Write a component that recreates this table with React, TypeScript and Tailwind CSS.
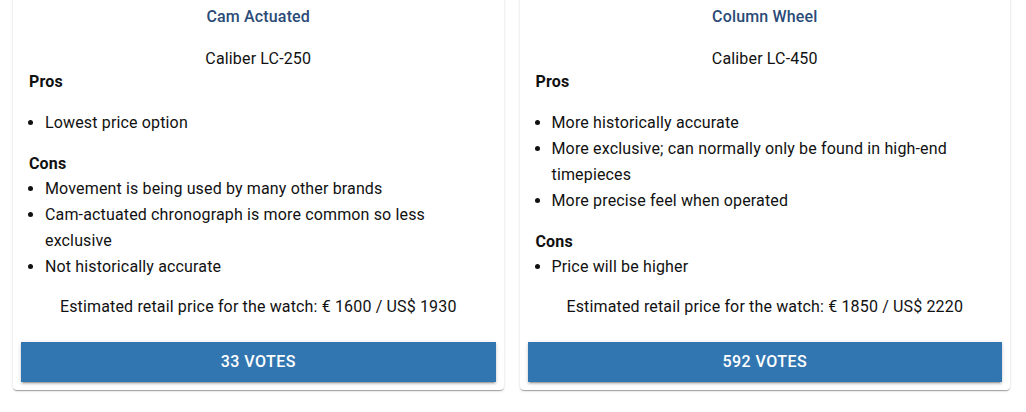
import React from "react";

type Card = {
  title: string;
  caliber: string;
  pros: string[];
  cons: string[];
  price: string;
  votes: string;
};

const cards: Card[] = [
  {
    title: "Cam Actuated",
    caliber: "Caliber LC-250",
    pros: ["Lowest price option"],
    cons: [
      "Movement is being used by many other brands",
      "Cam-actuated chronograph is more common so less exclusive",
      "Not historically accurate",
    ],
    price: "Estimated retail price for the watch: € 1600 / US$ 1930",
    votes: "33 votes",
  },
  {
    title: "Column Wheel",
    caliber: "Caliber LC-450",
    pros: [
      "More historically accurate",
      "More exclusive; can normally only be found in high-end timepieces",
      "More precise feel when operated",
    ],
    cons: ["Price will be higher"],
    price: "Estimated retail price for the watch: € 1850 / US$ 2220",
    votes: "592 votes",
  },
];

function VoteCard({ c }: { c: Card }) {
  return (
    <div className="-mt-[11px] flex flex-col rounded bg-white shadow-[0px_2px_1px_-1px_rgba(0,0,0,0.2),0px_1px_1px_0px_rgba(0,0,0,0.14),0px_1px_3px_0px_rgba(0,0,0,0.12)]">
      <div className="flex flex-1 flex-col px-4 pt-4 text-base tracking-[0.00938em] text-[#111]">
        <div className="text-center font-medium leading-6 text-[#2b4b77]">{c.title}</div>
        <div className="mt-[18px] text-center leading-6">{c.caliber}</div>
        <div className="font-bold leading-[21px]">Pros</div>
        <ul className="mt-[18px] list-disc pl-4 leading-[26px]">
          {c.pros.map((p) => (
            <li key={p}>{p}</li>
          ))}
        </ul>
        <div className="mt-4 font-bold leading-6">Cons</div>
        <ul className="list-disc pl-4 leading-[26px]">
          {c.cons.map((p) => (
            <li key={p}>{p}</li>
          ))}
        </ul>
        <div className="mt-[15px] text-center leading-6">{c.price}</div>
      </div>
      <div className="px-2 pb-2 pt-[23px]">
        <button className="flex h-10 w-full items-center justify-center bg-[#3276b1] text-base font-medium uppercase tracking-[0.02857em] text-white shadow-[0px_3px_1px_-2px_rgba(0,0,0,0.2),0px_2px_2px_0px_rgba(0,0,0,0.14),0px_1px_5px_0px_rgba(0,0,0,0.12)]">
          {c.votes}
        </button>
      </div>
    </div>
  );
}

export default function App() {
  return (
    <div
      className="h-[412px] w-[1026px] overflow-hidden bg-white"
      style={{ fontFamily: "Roboto, 'Liberation Sans', sans-serif" }}
    >
      <div className="grid grid-cols-2 gap-4 pl-[13px] pr-4">
        {cards.map((c) => (
          <VoteCard key={c.title} c={c} />
        ))}
      </div>
    </div>
  );
}
